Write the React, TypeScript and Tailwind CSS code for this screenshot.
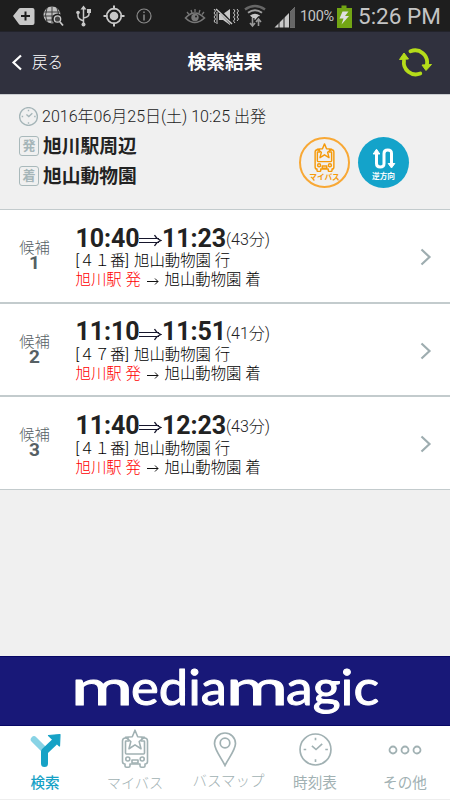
import React from "react";

const FONT = "font-[Roboto,'Noto_Sans_CJK_JP',sans-serif]";

function StatusBar() {
  return (
    <div className="flex h-[31px] w-full shrink-0 items-center bg-[#1e1e1e] text-[#c4c4c4]">
      <svg width="300" height="31" viewBox="0 0 300 31" fill="none" className="shrink-0">
        <path d="M13 16 L19 8.5 Q19.5 8 20.5 8 H32.5 Q34.5 8 34.5 10 V23 Q34.5 25 32.5 25 H20.5 Q19.5 25 19 24.2Z" fill="#c8c8c8" />
        <path d="M25.5 11.5v9M21 16h9" stroke="#1e1e1e" strokeWidth="2" />
        <circle cx="52" cy="15" r="8.5" fill="#c0c0c0" />
        <path d="M44 12h16M43.500 16h14M46 20h10M52 6.500v17M47 8q-3 7 0 14M57 8q3 6 0 10" stroke="#333" strokeWidth=".9" />
        <circle cx="57.500" cy="19" r="3.500" stroke="#1e1e1e" strokeWidth="4" />
        <circle cx="57.500" cy="19" r="3.200" fill="#444" stroke="#c8c8c8" strokeWidth="1.300" />
        <path d="m60 22 3 3.500" stroke="#c8c8c8" strokeWidth="1.800" />
        <path d="M83.500 8v16M83.500 21q-5.500-2-5.500-5v-3M83.500 18q5.500-1 5.500-4v-3" stroke="#c8c8c8" strokeWidth="1.500" />
        <path d="m80.500 9.500 3-4 3 4z" fill="#c8c8c8" />
        <circle cx="83.500" cy="24.500" r="2" fill="#c8c8c8" />
        <circle cx="78" cy="12.500" r="1.800" fill="#c8c8c8" />
        <path d="M87 9h4v4h-4z" fill="#c8c8c8" />
        <circle cx="114" cy="16" r="7.300" stroke="#c8c8c8" strokeWidth="1.700" />
        <circle cx="114" cy="16" r="4.300" fill="#c8c8c8" />
        <path d="M114 5.500v4M114 22.500v4M103.500 16h4M120.500 16h4" stroke="#c8c8c8" strokeWidth="2" />
        <circle cx="144" cy="16" r="7" stroke="#8a8a8a" strokeWidth="1.200" />
        <path d="M144 11.500v1.500M144 14.500v6" stroke="#9a9a9a" strokeWidth="1.300" />
        <path d="M185.500 18q9-10 19 0q-10 9-19 0z" stroke="#777" strokeWidth="1.600" />
        <circle cx="195" cy="17.500" r="3.700" fill="#777" />
        <circle cx="196" cy="16.500" r="1" fill="#1e1e1e" />
        <path d="m187 12 2 2.500M191 10l1 3M195 9v3M200 10l-1 3M204 12l-2 2.500" stroke="#777" strokeWidth="1.300" />
        <path d="M219 14v6h4l7 5V9l-7 5z" fill="#c8c8c8" />
        <path d="m217 8 16 17" stroke="#1e1e1e" strokeWidth="3" />
        <path d="m216 9 16 15" stroke="#c8c8c8" strokeWidth="1.500" />
        <path d="m214 9 1.500 2-1.500 2 1.500 2-1.500 2 1.500 2-1.500 2 1.500 2M217 12v12M233.500 9l1.500 2-1.500 2 1.500 2-1.500 2 1.500 2-1.500 2 1.500 2M237 9l1.500 2-1.500 2 1.500 2-1.500 2 1.500 2-1.500 2" stroke="#c8c8c8" />
        <path d="M245 9.500q10-7 20 0" stroke="#666" strokeWidth="2.500" />
        <path d="M248 12.800q7-5 14 0" stroke="#a0a0a0" strokeWidth="2" />
        <path d="M250 15.500q5-3.500 10 0l-5 5z" fill="#c8c8c8" />
        <path d="M252.500 18v8m-2.500-3 2.500 3 2.500-3M258.500 27v-8m-2.500 3 2.500-3 2.500 3" stroke="#1e1e1e" strokeWidth="4" />
        <path d="M252.500 18v8m-2.500-3 2.500 3 2.500-3M258.500 26v-7m-2.500 3 2.500-3 2.500 3" stroke="#999" strokeWidth="1.600" />
        <path d="M274.500 27.500 295 7v20.500z" fill="#c8c8c8" />
        <path d="M290 12 295 7v20.500h-5z" fill="#666" />
        <path d="M279 20v8M284 16v12M289.500 10v18" stroke="#1e1e1e" />
      </svg>
      <span className="w-[36px] shrink-0 whitespace-nowrap pt-[3px] text-[14.500px] tracking-[-0.300px]">100%</span>
      <svg width="17" height="31" viewBox="0 0 17 31" className="shrink-0">
        <path d="M1 8h4.500V5.500h5V8H16v20H1z" fill="#72a514" />
        <path d="m6.500 11.500-3 7h4l-2 6 7.500-8.500H9l3.500-4.500z" fill="#e0e0e0" />
      </svg>
      <span className="ml-[5px] whitespace-nowrap pt-[2px] text-[22.500px] leading-[29px]">5:26 PM</span>
    </div>
  );
}

function Header() {
  return (
    <header className="grid h-[62.500px] shrink-0 grid-cols-[150px_150px_150px] items-center border-t border-[#22232b] bg-[#30313e] text-white">
      <div className="flex items-center pl-[11px]">
        <svg width="12" height="17" viewBox="0 0 12 17" fill="none" stroke="white" strokeWidth="2.200">
          <path d="M10 1.500 2.500 8.500l7.500 7" />
        </svg>
        <span className="ml-[9px] text-[15.500px] font-light leading-5">戻る</span>
      </div>
      <h1 className="whitespace-nowrap text-center text-[18.800px] font-bold leading-6">検索結果</h1>
      <svg width="36" height="32" viewBox="0 0 36 32" className="ml-[97px]" fill="none">
        <path d="M13.500 4.300A12 12 0 0 1 29.800 18" stroke="#b5dc1a" strokeWidth="3.800" strokeLinecap="round" />
        <path d="M23.300 26.500A12 12 0 0 1 7 13.500" stroke="#b5dc1a" strokeWidth="3.800" strokeLinecap="round" />
        <path d="m25 18 9.500-.5-5.500 6z" fill="#b5dc1a" stroke="#b5dc1a" strokeLinejoin="round" />
        <path d="m2.500 12.500 9-.5-4.500-6z" fill="#b5dc1a" stroke="#b5dc1a" strokeLinejoin="round" />
      </svg>
    </header>
  );
}

function BusIcon({ className, width, height, sw }: { className?: string; width: number; height: number; sw: number }) {
  return (
    <svg width={width} height={height} viewBox="0 0 28 39" preserveAspectRatio="none" fill="none" stroke="currentColor" strokeWidth={sw} strokeLinejoin="round" className={className}>
      <path d="M8 9H4.500Q1.500 9 1.500 12v20.500Q1.500 35 4 35v2q0 1.200 1.500 1.200h2Q9 38.200 9 37v-2h10v2q0 1.200 1.500 1.200h2Q24 38.200 24 37v-2q2.500 0 2.500-2.500V12q0-3-3-3H20" />
      <path d="M8 12H5q-.5 0-.5.500V24q0 1 1 1h17q1 0 1-1V12.500q0-.5-.5-.5h-3" />
      <path d="m14 1.200 2.700 6.500 6.800.5-5.300 4.400 1.800 7.100-6-3.800-6 3.800 1.800-7.100-5.300-4.400 6.800-.5z" />
      <circle cx="6.800" cy="30" r="2" />
      <circle cx="21.200" cy="30" r="2" />
      <path d="M11 31h6v3h-6z" />
    </svg>
  );
}

function ClockIcon({ size, sw }: { size: number; sw: number }) {
  return (
    <svg width={size} height={size} viewBox="0 0 32 32" fill="none" stroke="currentColor" strokeWidth={sw} className="shrink-0">
      <circle cx="16" cy="16" r="15" />
      <path d="M16 4.500v2.500M16 25.500V28M4.500 16H7M25.500 16H28M12.500 12.500l4 3.500 6-5.500" />
    </svg>
  );
}

function Badge({ children }: { children: string }) {
  return (
    <span className="flex h-5 w-5 shrink-0 items-center justify-center rounded-[3px] border border-[#a9b9bb] text-[13px] font-bold leading-none text-[#a5b5b8]">
      {children}
    </span>
  );
}

function Summary() {
  return (
    <section className="flex h-[115.500px] shrink-0 border-t border-[#c9cccf] bg-[#f0f0f0] text-[#222]">
      <div className="w-[299px] pl-[19px] pt-[12px]">
        <div className="flex h-[20px] items-center text-[#a5b5b8]">
          <ClockIcon size={19} sw={2.300} />
          <span className="ml-[4px] whitespace-nowrap pt-px text-[16px] font-light leading-5 text-[#222]">2016年06月25日(土) 10:25 出発</span>
        </div>
        <div className="mt-[4px] flex h-[30px] items-center">
          <Badge>発</Badge>
          <span className="ml-[4px] pt-[3px] text-[18.800px] font-bold leading-6">旭川駅周辺</span>
        </div>
        <div className="flex h-[30px] items-center">
          <Badge>着</Badge>
          <span className="ml-[4px] pt-[3px] text-[18.800px] font-bold leading-6">旭山動物園</span>
        </div>
      </div>
      <button className="mt-[42px] flex h-[51px] w-[51px] flex-col items-center rounded-full border-2 border-[#f8a835] pt-[4px] text-[#f59a0a]">
        <BusIcon width={21} height={29} sw={1.900} />
        <span className="mt-px whitespace-nowrap text-[7.700px] font-bold leading-[9px]">マイバス</span>
      </button>
      <button className="ml-[8px] mt-[42px] flex h-[51px] w-[51px] flex-col items-center rounded-full bg-[#14a3ca] pt-[11px] text-white">
        <svg width="24" height="21" viewBox="0 0 24 21" fill="none" stroke="currentColor" strokeWidth="3" strokeLinejoin="round">
          <path d="M4.500 5v10.500q0 3.500 3.800 3.500T12 15.500v-10Q12 2 15.800 2t3.700 3.500V16" />
          <path d="M1.200 6h6.600L4.500 1.200zM16.200 15.500h6.600l-3.300 4.500z" fill="currentColor" strokeWidth="1" />
        </svg>
        <span className="mt-[3px] whitespace-nowrap text-[7.700px] font-bold leading-[9px]">逆方向</span>
      </button>
    </section>
  );
}

type Candidate = { no: number; from: string; to: string; mins: string; route: string };

const candidates: Candidate[] = [
  { no: 1, from: "10:40", to: "11:23", mins: "(43分)", route: "[４１番]" },
  { no: 2, from: "11:10", to: "11:51", mins: "(41分)", route: "[４７番]" },
  { no: 3, from: "11:40", to: "12:23", mins: "(43分)", route: "[４１番]" },
];

function Row({ c }: { c: Candidate }) {
  return (
    <li className="flex h-[93.700px] border-b-2 border-[#c3cbcd] bg-white last:h-[92.700px] last:border-b">
      <div className="flex w-[69px] flex-col items-center pt-[29px] text-[#566064]">
        <span className="text-[15.300px] font-light leading-[18px]">候補</span>
        <span className="-mt-[3px] text-[19px] font-bold leading-[18px]">{c.no}</span>
      </div>
      <div className="w-[343px] pl-[6.500px] pt-[14px] text-[15.400px] font-light text-black">
        <div className="flex h-[28px] items-center whitespace-nowrap text-[#222]">
          <span className="w-[63.500px] pt-px text-[25px] font-bold leading-7 tracking-[-0.100px]">{c.from}</span>
          <svg width="23" height="28" viewBox="0 0 23 28" fill="none" stroke="#16162c" className="shrink-0">
            <path d="M0 14.500h20M0 18.500h20" />
            <path d="M15.500 11q2 4 6.500 5.500-4.500 1.500-6.500 5.500" strokeWidth="1.200" />
          </svg>
          <span className="w-[64px] pt-px text-[25px] font-bold leading-7 tracking-[-0.100px]">{c.to}</span>
          <span className="pt-[4px] text-[16px] leading-6">{c.mins}</span>
        </div>
        <div className="flex h-[19px] items-center whitespace-nowrap pt-px">
          <span className="w-[58.500px] shrink-0">{c.route}</span>
          <span>旭山動物園 行</span>
        </div>
        <div className="flex h-[19px] items-center whitespace-nowrap pt-px">
          <span className="w-[71px] text-[#ff0000]">旭川駅 発</span>
          <svg width="12" height="8" viewBox="0 0 12 8" fill="none" stroke="#111">
            <path d="M0 4.500h11M8 1.500l3 3-3 3" />
          </svg>
          <span className="ml-[6px]">旭山動物園 着</span>
        </div>
      </div>
      <svg width="24" height="18" viewBox="0 0 24 18" fill="none" stroke="#9eadb0" strokeWidth="2.200" className="ml-[7px] mt-[38px]">
        <path d="m2.500 1.500 8 7.500-8 7.500" />
      </svg>
    </li>
  );
}

function Banner() {
  return (
    <div className="h-[70px] shrink-0 border-y border-[#070765] bg-[#181878]">
      <svg width="450" height="68" viewBox="0 657 450 68" fill="white" stroke="white" strokeWidth="1" strokeLinejoin="round" className="font-['Lato',sans-serif] text-[49px]">
        <text x="71" y="705" textLength="62" lengthAdjust="spacingAndGlyphs">m</text>
        <text x="131" y="705" textLength="96" lengthAdjust="spacingAndGlyphs">edia</text>
        <text x="226" y="705" textLength="62" lengthAdjust="spacingAndGlyphs">m</text>
        <text x="286" y="705" textLength="93" lengthAdjust="spacingAndGlyphs">agic</text>
      </svg>
    </div>
  );
}

function Tab({ label, active, labelClass, children }: { label: string; active?: boolean; labelClass: string; children: React.ReactNode }) {
  return (
    <button className={`flex flex-col items-center ${active ? "text-[#16a2c6]" : "text-[#a1b1b3]"}`}>
      <span className="flex h-[46px] items-center justify-center">{children}</span>
      <span className={`whitespace-nowrap leading-[22px] ${labelClass}`}>{label}</span>
    </button>
  );
}

function TabBar() {
  return (
    <nav className="grid h-[74px] shrink-0 grid-cols-5 border-b border-[#eee] bg-white">
      <Tab label="検索" active labelClass="text-[14.600px] font-medium">
        <svg width="32" height="35" viewBox="0 0 32 35" fill="none" className="mt-[3px]">
          <path d="M5 6.500 15 16.500" stroke="#88d3e5" strokeWidth="6.500" strokeLinecap="round" />
          <path d="M15.500 30.500V18.500L25 9.500" stroke="#16a2c6" strokeWidth="7" strokeLinecap="round" strokeLinejoin="round" />
          <path d="M19.500 2.500 31 1.500l-.5 11.500z" fill="#16a2c6" stroke="#16a2c6" strokeWidth="1.200" strokeLinejoin="round" />
        </svg>
      </Tab>
      <Tab label="マイバス" labelClass="text-[14.200px] font-light">
        <BusIcon width={28} height={39} sw={1.600} className="-mt-[2px]" />
      </Tab>
      <Tab label="バスマップ" labelClass="-mt-px text-[14.500px] font-light ml-[7px]">
        <svg width="24" height="35" viewBox="0 0 24 35" fill="none" stroke="currentColor" strokeWidth="1.700">
          <path d="M12 33.500C9 27 1.500 18 1.500 11.500a10.500 10.500 0 0 1 21 0C22.500 18 15 27 12 33.500z" />
          <circle cx="12" cy="11" r="4.800" />
        </svg>
      </Tab>
      <Tab label="時刻表" labelClass="text-[14.600px]">
        <ClockIcon size={33} sw={1.600} />
      </Tab>
      <Tab label="その他" labelClass="text-[14.600px]">
        <svg width="34" height="10" viewBox="0 0 34 10" fill="none" stroke="currentColor" strokeWidth="1.800" className="mt-px">
          <circle cx="5" cy="5" r="3.500" />
          <circle cx="17" cy="5" r="3.500" />
          <circle cx="29" cy="5" r="3.500" />
        </svg>
      </Tab>
    </nav>
  );
}

export default function App() {
  return (
    <div className={`flex h-[800px] w-[450px] flex-col overflow-hidden bg-[#f0f0f0] ${FONT}`}>
      <StatusBar />
      <Header />
      <Summary />
      <main className="flex-1">
        <ul className="border-t border-[#c3cbcd]">
          {candidates.map((c) => (
            <Row key={c.no} c={c} />
          ))}
        </ul>
      </main>
      <Banner />
      <TabBar />
    </div>
  );
}
